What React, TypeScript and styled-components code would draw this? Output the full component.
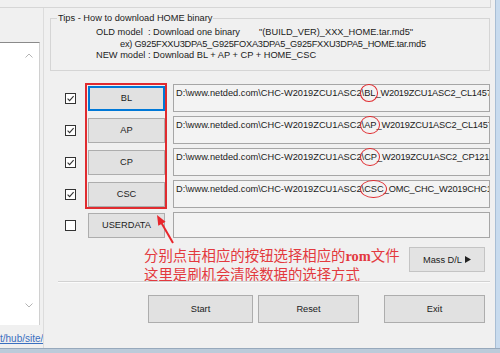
import React from "react";
import styled, { createGlobalStyle } from "styled-components";

const GlobalStyle = createGlobalStyle`
  html, body {
    margin: 0;
    padding: 0;
    background: #f0f0f0;
  }
  body {
    font-family: "Liberation Sans", Arial, sans-serif;
    font-size: 9.25px;
    color: #1b1b1b;
  }
`;

const Window = styled.div`
  width: 500px;
  height: 353px;
  display: flex;
  flex-direction: column;
  overflow: hidden;
  background: #f0f0f0;
`;

const Body = styled.div`
  display: flex;
  flex: 1;
  min-height: 0;
`;

const Content = styled.div`
  width: 495px;
  display: flex;
  flex-direction: column;
  position: relative;
`;

const RightEdge = styled.div`
  width: 5px;
  box-sizing: border-box;
  background: #c8dbee;
  border-left: 1px solid #a9bed4;
`;

const BottomEdge = styled.div`
  height: 4px;
  background: #bccbda;
  border-top: 1px solid #97a9bc;
`;

const TopBox = styled.div`
  height: 7px;
  width: 490px;
  border-bottom: 1px solid #d6d6d6;
  border-right: 1px solid #d6d6d6;
`;

const Middle = styled.div`
  display: flex;
  flex: 1;
  min-height: 0;
`;

const LeftPane = styled.div`
  width: 44px;
  box-sizing: border-box;
  border-right: 1px solid #dcdcdc;
  display: flex;
  flex-direction: column;
`;

const ListBox = styled.div`
  margin-top: 34px;
  width: 40px;
  height: 283px;
  box-sizing: border-box;
  background: #fff;
  border-top: 1px solid #8a8a8a;
  border-right: 1px solid #d0d0d0;
  display: flex;
  flex-direction: column;
  justify-content: space-between;
  align-items: flex-end;
  padding: 10px 6px 17px 0;
`;

const SiteLink = styled.a`
  margin-top: 8px;
  width: 43px;
  text-align: right;
  white-space: nowrap;
  overflow: hidden;
  font-size: 10px;
  color: #3a6fc0;
  text-decoration: underline;
`;

const RightPane = styled.div`
  flex: 1;
  display: flex;
  flex-direction: column;
`;

const TipsBox = styled.div`
  position: relative;
  margin: 10px 5px 0 6px;
  height: 53px;
  box-sizing: border-box;
  border: 1px solid #d5d5d5;
  padding: 8px 0 0 45px;
  line-height: 11.5px;
`;

const TipsTitle = styled.span`
  position: absolute;
  top: -6px;
  left: 6px;
  padding: 0 1px;
  background: #f0f0f0;
  line-height: 11px;
`;

const TipLine = styled.div<{ $indent?: number; $tight?: boolean }>`
  white-space: pre;
  padding-left: ${(p) => p.$indent ?? 0}px;
  letter-spacing: ${(p) => (p.$tight ? "-0.25px" : "0")};
`;

const Gap = styled.span<{ $w: number }>`
  display: inline-block;
  width: ${(p) => p.$w}px;
`;

const Rows = styled.div`
  position: relative;
  margin-top: 13px;
`;

const Row = styled.div<{ $h?: number }>`
  display: flex;
  align-items: center;
  height: ${(p) => p.$h ?? 28}px;
  margin-bottom: 4px;
`;

const CheckBox = styled.div`
  margin-left: 21px;
  width: 11px;
  height: 11px;
  box-sizing: border-box;
  border: 1px solid #333;
  background: #fff;
  display: flex;
`;

const ActionButton = styled.div<{ $focused?: boolean }>`
  margin-left: 12px;
  width: 77px;
  height: 25px;
  box-sizing: border-box;
  background: #e1e1e1;
  border: 1px solid ${(p) => (p.$focused ? "#0078d7" : "#adadad")};
  box-shadow: ${(p) => (p.$focused ? "inset 0 0 0 1px #0078d7" : "none")};
  display: flex;
  align-items: center;
  justify-content: center;
`;

const PathField = styled.div<{ $h?: number }>`
  margin-left: 8px;
  width: 317px;
  height: ${(p) => p.$h ?? 28}px;
  box-sizing: border-box;
  border: 1px solid #a6a6a6;
  background: #f3f3f3;
  padding: 2px 2px 0;
  line-height: 12px;
  white-space: nowrap;
  overflow-x: clip;
  overflow-y: visible;
`;

const Tail = styled.span`
  letter-spacing: -0.2px;
`;

const Mark = styled.span`
  position: relative;
  &::after {
    content: "";
    position: absolute;
    left: -4px;
    right: -3px;
    top: -4px;
    bottom: -4px;
    border: 1.6px solid #e02b2f;
    border-radius: 50%;
  }
`;

const RedFrame = styled.div`
  position: absolute;
  left: 41px;
  top: -1px;
  width: 82px;
  height: 126px;
  box-sizing: border-box;
  border: 2px solid #e02b2f;
  pointer-events: none;
`;

const AnnotRow = styled.div`
  display: flex;
  align-items: flex-start;
  height: 35px;
  margin-top: 4px;
`;

const Note = styled.div`
  margin-left: 100px;
  font-family: "Noto Sans CJK SC", sans-serif;
  font-size: 14.4px;
  line-height: 18px;
  color: #e3393e;
  white-space: nowrap;
`;

const Latin = styled.span`
  font-family: "Liberation Serif", "Noto Sans CJK SC", serif;
  font-weight: bold;
`;

const MassButton = styled.div`
  margin: 1px 10px 0 auto;
  width: 76px;
  height: 25px;
  box-sizing: border-box;
  background: #e3e3e3;
  border: 1px solid #c4c4c4;
  display: flex;
  align-items: center;
  justify-content: center;
  gap: 3px;
`;

const Separator = styled.div`
  margin: 0 5px 0 14px;
  border-top: 1px solid #d2d2d2;
  border-bottom: 1px solid #fbfbfb;
`;

const BottomBar = styled.div`
  display: flex;
  margin-top: 12px;
`;

const BigButton = styled.div<{ $w: number; $ml: number }>`
  margin-left: ${(p) => p.$ml}px;
  width: ${(p) => p.$w}px;
  height: 28px;
  box-sizing: border-box;
  background: #e1e1e1;
  border: 1px solid #adadad;
  display: flex;
  align-items: center;
  justify-content: center;
`;

const Arrow = styled.svg`
  position: absolute;
  left: 150px;
  top: 210px;
  width: 30px;
  height: 40px;
  pointer-events: none;
`;

const Check = () => (
  <svg width="9" height="9" viewBox="0 0 9 9">
    <path d="M1.6 4.6 L3.6 6.6 L7.6 2.2" fill="none" stroke="#333" strokeWidth="1.1" />
  </svg>
);

const Chevron = ({ up }: { up?: boolean }) => (
  <svg width="8" height="5" viewBox="0 0 8 5">
    <path
      d={up ? "M0.5 4.5 L4 1 L7.5 4.5" : "M0.5 0.5 L4 4 L7.5 0.5"}
      fill="none"
      stroke="#b4b4b4"
      strokeWidth="1"
    />
  </svg>
);

const files = [
  { id: "BL", rest: "_W2019ZCU1ASC2_CL14570050_QB4432.tar.md5", focused: true },
  { id: "AP", rest: "_W2019ZCU1ASC2_CL1457 QB4432.tar.md5" },
  { id: "CP", rest: "_W2019ZCU1ASC2_CP12193871_CL14570050.tar.md5" },
  { id: "CSC", rest: "_OMC_CHC_W2019CHC1ASC2_CL14570050.tar.md5" },
];

const prefix = "D:\\www.netded.com\\CHC-W2019ZCU1ASC2\\";

export default function App() {
  return (
    <Window>
      <GlobalStyle />
      <Body>
        <Content>
          <TopBox />
          <Middle>
            <LeftPane>
              <ListBox>
                <Chevron up />
                <Chevron />
              </ListBox>
              <SiteLink>t/hub/site/</SiteLink>
            </LeftPane>
            <RightPane>
              <TipsBox>
                <TipsTitle>Tips - How to download HOME binary</TipsTitle>
                <TipLine>
                  {"OLD model  : Download one binary"}
                  <Gap $w={19} />
                  {'"(BUILD_VER)_XXX_HOME.tar.md5"'}
                </TipLine>
                <TipLine $indent={24} $tight>
                  ex) G925FXXU3DPA5_G925FOXA3DPA5_G925FXXU3DPA5_HOME.tar.md5
                </TipLine>
                <TipLine>NEW model : Download BL + AP + CP + HOME_CSC</TipLine>
              </TipsBox>
              <Rows>
                {files.map((f) => (
                  <Row key={f.id}>
                    <CheckBox>
                      <Check />
                    </CheckBox>
                    <ActionButton $focused={f.focused}>{f.id}</ActionButton>
                    <PathField>
                      {prefix}
                      <Mark>{f.id}</Mark>
                      <Tail>{f.rest}</Tail>
                    </PathField>
                  </Row>
                ))}
                <Row $h={26}>
                  <CheckBox />
                  <ActionButton>USERDATA</ActionButton>
                  <PathField $h={26} />
                </Row>
                <RedFrame />
              </Rows>
              <AnnotRow>
                <Note>
                  分别点击相应的按钮选择相应的<Latin>rom</Latin>文件
                  <br />
                  这里是刷机会清除数据的选择方式
                </Note>
                <MassButton>
                  Mass D/L
                  <svg width="6" height="7" viewBox="0 0 6 7">
                    <path d="M0 0 L6 3.5 L0 7 Z" fill="#222" />
                  </svg>
                </MassButton>
              </AnnotRow>
              <Separator />
              <BottomBar>
                <BigButton $ml={104} $w={105}>Start</BigButton>
                <BigButton $ml={5} $w={101}>Reset</BigButton>
                <BigButton $ml={25} $w={101}>Exit</BigButton>
              </BottomBar>
            </RightPane>
          </Middle>
          <Arrow viewBox="0 0 30 40">
            <line x1="23" y1="33" x2="11.5" y2="13" stroke="#e8262c" strokeWidth="2" />
            <polygon points="7,5 15.6,11.8 8.3,15.8" fill="#e8262c" />
          </Arrow>
        </Content>
        <RightEdge />
      </Body>
      <BottomEdge />
    </Window>
  );
}
